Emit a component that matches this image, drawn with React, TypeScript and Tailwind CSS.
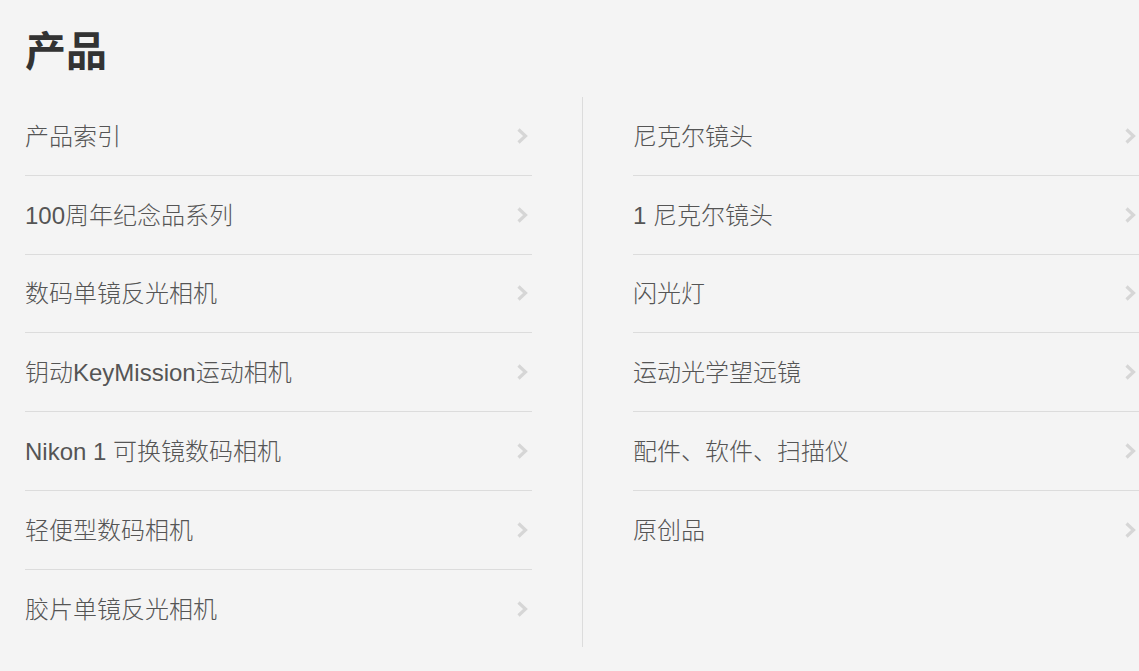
import React from "react";

const left = [
  "产品索引",
  "100周年纪念品系列",
  "数码单镜反光相机",
  "钥动KeyMission运动相机",
  "Nikon 1 可换镜数码相机",
  "轻便型数码相机",
  "胶片单镜反光相机",
];
const right = [
  "尼克尔镜头",
  "1 尼克尔镜头",
  "闪光灯",
  "运动光学望远镜",
  "配件、软件、扫描仪",
  "原创品",
];

function Chevron() {
  return (
    <svg width="12" height="16" viewBox="0 0 12 16" className="shrink-0">
      <path d="M2.5 1.5 L9.5 8 L2.5 14.5" fill="none" stroke="#d6d6d6" strokeWidth="3.2" />
    </svg>
  );
}

function Column({ items }: { items: string[] }) {
  return (
    <ul className="w-[507px] shrink-0">
      {items.map((t, i) => (
        <li
          key={t}
          className={`flex h-[78.8px] items-center justify-between pr-[4px] ${
            i < items.length - 1 ? "border-b border-[#dcdcdc]" : ""
          }`}
        >
          <span className="text-[24px] font-light text-[#555555] leading-none pt-[2px]">{t}</span>
          <Chevron />
        </li>
      ))}
    </ul>
  );
}

export default function App() {
  return (
    <div
      className="w-[1139px] h-[671px] overflow-hidden bg-[#f4f4f4] pl-[25px] pt-[32px]"
      style={{ fontFamily: '"Liberation Sans", "Noto Sans CJK SC", sans-serif' }}
    >
      <h1 className="text-[41px] font-bold leading-none text-[#333333] h-[65px]">产品</h1>
      <div className="flex items-start">
        <Column items={left} />
        <div className="w-px h-[550px] bg-[#dcdcdc] ml-[50px] mr-[50px] shrink-0" />
        <Column items={right} />
      </div>
    </div>
  );
}
